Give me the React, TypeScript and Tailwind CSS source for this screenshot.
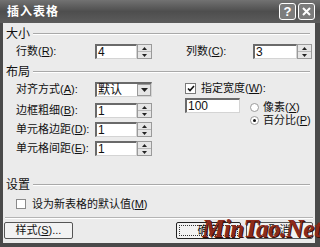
import React from "react";

// small up/down spinner next to number fields
const Spin = () => (
  <div className="flex h-full w-[15px] shrink-0 flex-col border border-[#9a9a9a] bg-[#e6e6e6]">
    <div className="flex flex-1 items-center justify-center border-b border-[#b8b8b8]">
      <svg width="5" height="3" viewBox="0 0 5 3">
        <path d="M2.5 0L5 3H0z" fill="#222" />
      </svg>
    </div>
    <div className="flex flex-1 items-center justify-center">
      <svg width="5" height="3" viewBox="0 0 5 3">
        <path d="M0 0H5L2.5 3z" fill="#222" />
      </svg>
    </div>
  </div>
);

const Field = ({ value, width }: { value: string; width: string }) => (
  <div
    className={`flex h-full shrink-0 items-center border-l-2 border-t-2 border-r border-b border-l-[#6a6a6a] border-t-[#6a6a6a] border-r-[#d4d4d4] border-b-[#d4d4d4] bg-white pl-[1px] text-[12px] ${width}`}
  >
    {value}
  </div>
);

const Label = ({ text, k, width }: { text: string; k: string; width: string }) => (
  <div className={`shrink-0 whitespace-nowrap ${width}`}>
    {text}(<u>{k}</u>):
  </div>
);

const Group = ({ title }: { title: string }) => (
  <div className="flex h-[14px] items-center gap-[3px] pl-[3px] pr-[5px]">
    <span className="text-[12px]">{title}</span>
    <div className="h-0 flex-1 border-t border-b border-t-[#a9a9a9] border-b-white" />
  </div>
);

const Button = ({ children, width, focus }: { children: React.ReactNode; width: string; focus?: boolean }) => (
  <div
    className={`flex h-[17px] shrink-0 items-center justify-center rounded-[2px] border bg-[#f2f2f2] ${width} ${
      focus ? "border-[#222] p-[2px]" : "border-[#555]"
    }`}
  >
    {focus ? (
      <div className="flex h-full w-full items-center justify-center border border-dotted border-[#333]">
        {children}
      </div>
    ) : (
      children
    )}
  </div>
);

export default function App() {
  return (
    <div className="flex h-[247px] w-[320px] flex-col whitespace-nowrap bg-[#4a4a4a] pb-[4px] pl-[3px] pr-[5px] font-['Liberation_Sans','Noto_Sans_CJK_SC',sans-serif] text-[11px] leading-none text-[#111]">
      {/* title bar */}
      <div className="-ml-[3px] -mr-[5px] flex h-[23px] shrink-0 items-center justify-between bg-linear-to-b from-[#727272] via-[#4e4e4e] to-[#5c5c5c] pl-[7px] pr-[5px]">
        <span className="text-[12px] font-bold tracking-[1px] text-white">插入表格</span>
        <div className="flex gap-[2px]">
          <div className="flex h-[17px] w-[17px] items-center justify-center rounded-[3px] border border-white bg-[#7c7c7c] text-[13px] font-bold text-white">
            ?
          </div>
          <div className="flex h-[17px] w-[17px] items-center justify-center rounded-[3px] border border-white bg-[#7c7c7c]">
            <svg width="9" height="9" viewBox="0 0 9 9">
              <path d="M1 1L8 8M8 1L1 8" stroke="white" strokeWidth="2" />
            </svg>
          </div>
        </div>
      </div>

      {/* body */}
      <div className="relative flex flex-1 flex-col bg-[#ebebeb] pt-[4px]">
        <Group title="大小" />
        <div className="mt-[3px] flex h-[15px] items-center pl-[13px]">
          <Label text="行数" k="R" width="w-[79px]" />
          <Field value="4" width="w-[42px]" />
          <Spin />
          <div className="w-[34px] shrink-0" />
          <Label text="列数" k="C" width="w-[67px]" />
          <Field value="3" width="w-[44px]" />
          <Spin />
        </div>

        <div className="mt-[6px]">
          <Group title="布局" />
        </div>
        <div className="mt-[3px] flex pl-[13px]">
          <div className="flex w-[136px] shrink-0 flex-col">
            <div className="flex h-[15px] items-center">
              <Label text="对齐方式" k="A" width="w-[79px]" />
              <div className="flex h-full w-[57px] shrink-0 items-center border-l-2 border-t-2 border-r border-b border-l-[#6a6a6a] border-t-[#6a6a6a] border-r-[#d4d4d4] border-b-[#d4d4d4] bg-white pl-[1px] text-[12px]">
                <span className="flex-1">默认</span>
                <div className="flex h-full w-[14px] items-center justify-center border border-[#9a9a9a] bg-[#e6e6e6]">
                  <svg width="7" height="4" viewBox="0 0 7 4">
                    <path d="M0 0H7L3.5 4z" fill="#222" />
                  </svg>
                </div>
              </div>
            </div>
            <div className="mt-[6px] flex h-[15px] items-center">
              <Label text="边框粗细" k="B" width="w-[79px]" />
              <Field value="1" width="w-[42px]" />
              <Spin />
            </div>
            <div className="mt-[4px] flex h-[15px] items-center">
              <Label text="单元格边距" k="D" width="w-[79px]" />
              <Field value="1" width="w-[42px]" />
              <Spin />
            </div>
            <div className="mt-[4px] flex h-[15px] items-center">
              <Label text="单元格间距" k="E" width="w-[79px]" />
              <Field value="1" width="w-[42px]" />
              <Spin />
            </div>
          </div>

          <div className="ml-[33px] flex flex-col">
            <div className="mt-[1px] flex h-[11px] items-center gap-[5px]">
              <div className="flex h-[11px] w-[11px] items-center justify-center border border-[#7a7a7a] bg-white">
                <svg width="8" height="7" viewBox="0 0 8 7">
                  <path d="M1 3.5L3 5.5L7 1" stroke="#111" strokeWidth="1.6" fill="none" />
                </svg>
              </div>
              <span>
                指定宽度(<u>W</u>):
              </span>
            </div>
            <div className="mt-[4px] flex">
              <div className="h-[15px]">
                <Field value="100" width="w-[55px]" />
              </div>
              <div className="ml-[10px] mt-[4px] flex flex-col">
                <div className="flex h-[11px] items-center gap-[4px]">
                  <div className="h-[9px] w-[9px] shrink-0 rounded-full border border-[#9a9a9a] bg-white" />
                  <span>
                    像素(<u>X</u>)
                  </span>
                </div>
                <div className="mt-[2px] flex h-[11px] items-center gap-[4px]">
                  <div className="flex h-[9px] w-[9px] shrink-0 items-center justify-center rounded-full border border-[#9a9a9a] bg-white">
                    <div className="h-[3px] w-[3px] rounded-full bg-[#111]" />
                  </div>
                  <span>
                    百分比(<u>P</u>)
                  </span>
                </div>
              </div>
            </div>
          </div>
        </div>

        <div className="mt-[22px]">
          <Group title="设置" />
        </div>
        <div className="mt-[5px] flex h-[14px] items-center gap-[6px] pl-[13px]">
          <div className="h-[10px] w-[10px] border border-[#8a8a8a] bg-white" />
          <span>
            设为新表格的默认值(<u>M</u>)
          </span>
        </div>
        <div className="mx-[2px] mt-[6px] h-0 border-t border-b border-t-[#b4b4b4] border-b-white" />

        <div className="mt-[3px] flex items-center pl-[1px] pr-[2px]">
          <Button width="w-[69px]">
            样式(<u>S</u>)...
          </Button>
          <div className="flex-1" />
          <Button width="w-[65px]" focus>
            确定
          </Button>
          <div className="w-[5px] shrink-0" />
          <Button width="w-[67px]">取消</Button>
        </div>

        {/* watermark */}
        <div className="pointer-events-none absolute left-[199px] top-[193px] font-['Liberation_Serif',serif] text-[25px] font-bold italic leading-none tracking-[-0.5px] text-[#8c2a1a] [text-shadow:1px_1px_0_#3a1008]">
          MinTao.Net
        </div>
      </div>
    </div>
  );
}
